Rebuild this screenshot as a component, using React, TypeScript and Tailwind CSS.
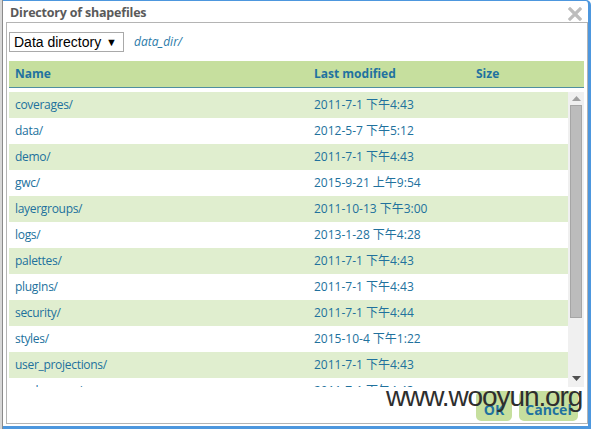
import React from "react";

const rows: [string, string][] = [
  ["coverages/", "2011-7-1 下午4:43"],
  ["data/", "2012-5-7 下午5:12"],
  ["demo/", "2011-7-1 下午4:43"],
  ["gwc/", "2015-9-21 上午9:54"],
  ["layergroups/", "2011-10-13 下午3:00"],
  ["logs/", "2013-1-28 下午4:28"],
  ["palettes/", "2011-7-1 下午4:43"],
  ["plugIns/", "2011-7-1 下午4:43"],
  ["security/", "2011-7-1 下午4:44"],
  ["styles/", "2015-10-4 下午1:22"],
  ["user_projections/", "2011-7-1 下午4:43"],
  ["workspaces/", "2011-7-1 下午4:43"],
  ["www/", "2011-7-1 下午4:43"],
];

const font = { fontFamily: '"Open Sans", "Noto Sans CJK SC", sans-serif' };

export default function App() {
  return (
    <div className="relative w-[591px] h-[429px] bg-white overflow-hidden flex" style={font}>
      <div className="w-[3px] h-full bg-[#d8d8d8] border-r border-[#8a8a8a]" />
      <div className="flex-1 h-full flex flex-col bg-white border-r-[3px] border-b-[3px] border-t border-[#4d97de] rounded-tr-[5px]">
        <div className="h-[21px] flex items-center justify-between pl-[7px] pr-[6px]">
          <span className="text-[12.5px] font-bold text-[#5a5a5a] leading-none pt-[3px] tracking-[-0.2px]">Directory of shapefiles</span>
          <svg width="14" height="14" viewBox="0 0 14 14" className="mt-[5px]">
            <path d="M2 2 L12 12 M12 2 L2 12" stroke="#bdbdbd" strokeWidth="3.2" strokeLinecap="square" />
          </svg>
        </div>
        <div className="flex-1 ml-[3px] mb-[2px] border border-[#b4b4b4] flex flex-col pl-[2px] pr-[3px] pt-[9px]">
          <div className="flex items-center gap-[10px] h-[20px]">
            <div className="w-[115px] h-[20px] border border-[#a9a9a9] flex items-center justify-between pl-[4px] pr-[6px] text-[14px] text-black leading-none" style={{ fontFamily: '"Liberation Sans", Arial, sans-serif' }}>
              <span>Data directory</span>
              <span className="text-[11px]">▼</span>
            </div>
            <span className="italic text-[12px] text-[#2a7aa8]">data_dir/</span>
          </div>
          <div className="mt-[9px] h-[27px] bg-[#c6df9e] border-b border-[#4f8fa0] flex items-center text-[12px] font-bold text-[#1f72a0]">
            <span className="pl-[6px] w-[305px]">Name</span>
            <span className="w-[162px]">Last modified</span>
            <span>Size</span>
          </div>
          <div className="mt-[4px] h-[295px] flex overflow-hidden">
            <div className="flex-1 overflow-hidden">
              {rows.map(([n, d], i) => (
                <div key={n} className={`h-[26px] shrink-0 flex items-center text-[12px] text-[#21719d] ${i % 2 === 0 ? "bg-[#e0eecf]" : "bg-white"}`}>
                  <span className="pl-[6px] w-[305px] tracking-[-0.3px]">{n}</span>
                  <span>{d}</span>
                </div>
              ))}
            </div>
            <div className="w-[16px] h-full bg-[#f0f0f0] flex flex-col items-center">
              <svg width="9" height="5" viewBox="0 0 9 5" className="mt-[4px]">
                <path d="M0 5 L4.5 0 L9 5 Z" fill="#a0a0a0" />
              </svg>
              <div className="mt-[4px] w-[12px] h-[213px] bg-[#bcbcbc] border border-[#a6a6a6]" />
              <div className="flex-1" />
              <svg width="9" height="5" viewBox="0 0 9 5" className="mb-[6px]">
                <path d="M0 0 L9 0 L4.5 5 Z" fill="#505050" />
              </svg>
            </div>
          </div>
          <div className="flex justify-end gap-[7px] mt-[4px] pr-[6px]">
            <div className="w-[36px] h-[30px] rounded-[5px] bg-[#c6df9e] flex items-center justify-center pt-[6px] text-[14px] font-bold text-[#1f72a0]">OK</div>
            <div className="w-[59px] h-[30px] rounded-[5px] bg-[#c6df9e] flex items-center justify-center pt-[6px] text-[14px] font-bold text-[#1f72a0]">Cancel</div>
          </div>
        </div>
      </div>
      <div className="absolute left-[386px] top-[383px] text-[28px] leading-none text-[#2e2e2e]" style={{ fontFamily: '"Liberation Sans", Arial, sans-serif', letterSpacing: "-1.1px" }}>
        www.wooyun.org
      </div>
    </div>
  );
}
